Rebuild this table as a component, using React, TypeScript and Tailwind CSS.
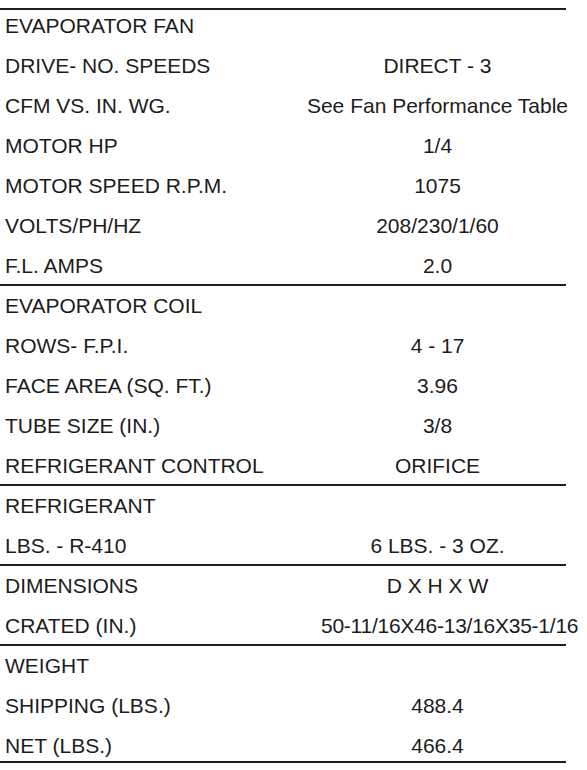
import React from "react";

interface Row {
  label: string;
  value?: string;
  valueClass?: string;
}

const sections: Row[][] = [
  [
    { label: "EVAPORATOR FAN" },
    { label: "DRIVE- NO. SPEEDS", value: "DIRECT - 3" },
    { label: "CFM VS. IN. WG.", value: "See Fan Performance Table" },
    { label: "MOTOR HP", value: "1/4" },
    { label: "MOTOR SPEED R.P.M.", value: "1075" },
    { label: "VOLTS/PH/HZ", value: "208/230/1/60" },
    { label: "F.L. AMPS", value: "2.0" },
  ],
  [
    { label: "EVAPORATOR COIL" },
    { label: "ROWS- F.P.I.", value: "4 - 17" },
    { label: "FACE AREA (SQ. FT.)", value: "3.96" },
    { label: "TUBE SIZE (IN.)", value: "3/8" },
    { label: "REFRIGERANT CONTROL", value: "ORIFICE" },
  ],
  [
    { label: "REFRIGERANT" },
    { label: "LBS. - R-410", value: "6 LBS. - 3 OZ." },
  ],
  [
    { label: "DIMENSIONS", value: "D X H X W" },
    {
      label: "CRATED (IN.)",
      value: "50-11/16X46-13/16X35-1/16",
      valueClass: "pl-[21px] tracking-[-0.25px]",
    },
  ],
  [
    { label: "WEIGHT" },
    { label: "SHIPPING (LBS.)", value: "488.4" },
    { label: "NET (LBS.)", value: "466.4" },
  ],
];

export default function App() {
  return (
    <div
      className="w-[587px] h-[770px] bg-white pt-[8px] text-[21px] text-[#1c1c1c] overflow-hidden"
      style={{ fontFamily: '"Liberation Sans", Arial, sans-serif' }}
    >
      <div className="w-[566px]">
        {sections.map((rows, si) => {
          const lastSection = si === sections.length - 1;
          return (
            <div
              key={si}
              className={`border-t-2 border-[#1f1f1f] ${si > 0 ? "-mt-[2px]" : ""}`}
            >
              {rows.map((row, ri) => {
                const first = si === 0 && ri === 0;
                const last = lastSection && ri === rows.length - 1;
                let rowClass = "h-[40px] leading-[40px]";
                if (first) rowClass = "h-[36px] leading-[32px]";
                if (last) rowClass = "h-[37px] leading-[40px] border-b-2 border-[#1f1f1f]";
                return (
                  <div
                    key={ri}
                    className={`grid grid-cols-[300px_275px] whitespace-nowrap ${rowClass}`}
                  >
                    <div className="pl-[5px]">{row.label}</div>
                    <div className={`text-center ${row.valueClass ?? ""}`}>
                      {row.value ?? ""}
                    </div>
                  </div>
                );
              })}
            </div>
          );
        })}
      </div>
    </div>
  );
}
